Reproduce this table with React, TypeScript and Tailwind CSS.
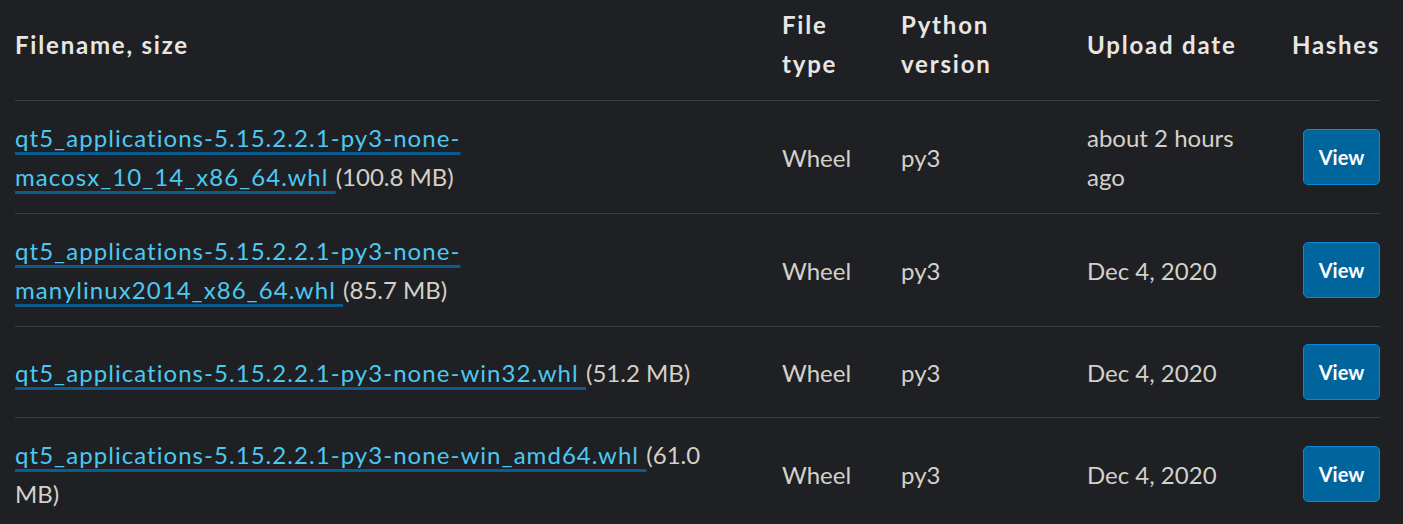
import React from "react";

const font = { fontFamily: "Lato, 'Noto Sans', sans-serif" };

type Row = {
  lines: { link?: string; rest?: string }[];
  date: string[];
};

const rows: Row[] = [
  {
    lines: [
      { link: "qt5_applications-5.15.2.2.1-py3-none-" },
      { link: "macosx_10_14_x86_64.whl ", rest: "(100.8 MB)" },
    ],
    date: ["about 2 hours", "ago"],
  },
  {
    lines: [
      { link: "qt5_applications-5.15.2.2.1-py3-none-" },
      { link: "manylinux2014_x86_64.whl ", rest: "(85.7 MB)" },
    ],
    date: ["Dec 4, 2020"],
  },
  {
    lines: [{ link: "qt5_applications-5.15.2.2.1-py3-none-win32.whl ", rest: "(51.2 MB)" }],
    date: ["Dec 4, 2020"],
  },
  {
    lines: [
      { link: "qt5_applications-5.15.2.2.1-py3-none-win_amd64.whl ", rest: "(61.0" },
      { rest: "MB)" },
    ],
    date: ["Dec 4, 2020"],
  },
];

const cols = "grid grid-cols-[767px_119px_186px_205px_88px]";

export default function App() {
  return (
    <div className="w-[1403px] h-[524px] overflow-hidden bg-[#1f2023] text-[24px] leading-[39px] text-[#d4d0ca]" style={font}>
      <div className="ml-[15px] w-[1365px]">
        <div className={`${cols} items-center pt-[5px] pb-[17px] border-b border-[#3c3f42] font-bold text-[#e8e6e3] tracking-[1.8px]`}>
          <div>Filename, size</div>
          <div>File<br />type</div>
          <div>Python<br />version</div>
          <div>Upload date</div>
          <div className="tracking-[1.7px]">Hashes</div>
        </div>
        {rows.map((r, i) => (
          <div key={i} className={`${cols} items-center py-[17px] border-b border-[#3c3f42]`}>
            <div>
              {r.lines.map((l, j) => (
                <div key={j} className="whitespace-pre">
                  {l.link && (
                    <a className="text-[#4cc8f3] tracking-[1.05px] underline decoration-[#0a5b8f] decoration-[3px] underline-offset-[5px]">{l.link}</a>
                  )}
                  {l.rest && <span>{l.rest}</span>}
                </div>
              ))}
            </div>
            <div>Wheel</div>
            <div>py3</div>
            <div>
              {r.date.map((d, j) => (
                <div key={j}>{d}</div>
              ))}
            </div>
            <div className="flex justify-end">
              <button className="w-[77px] h-[56px] rounded-[5px] bg-[#00649d] border border-[#0a8ad6] text-white font-bold text-[20px] leading-none">
                View
              </button>
            </div>
          </div>
        ))}
      </div>
    </div>
  );
}
